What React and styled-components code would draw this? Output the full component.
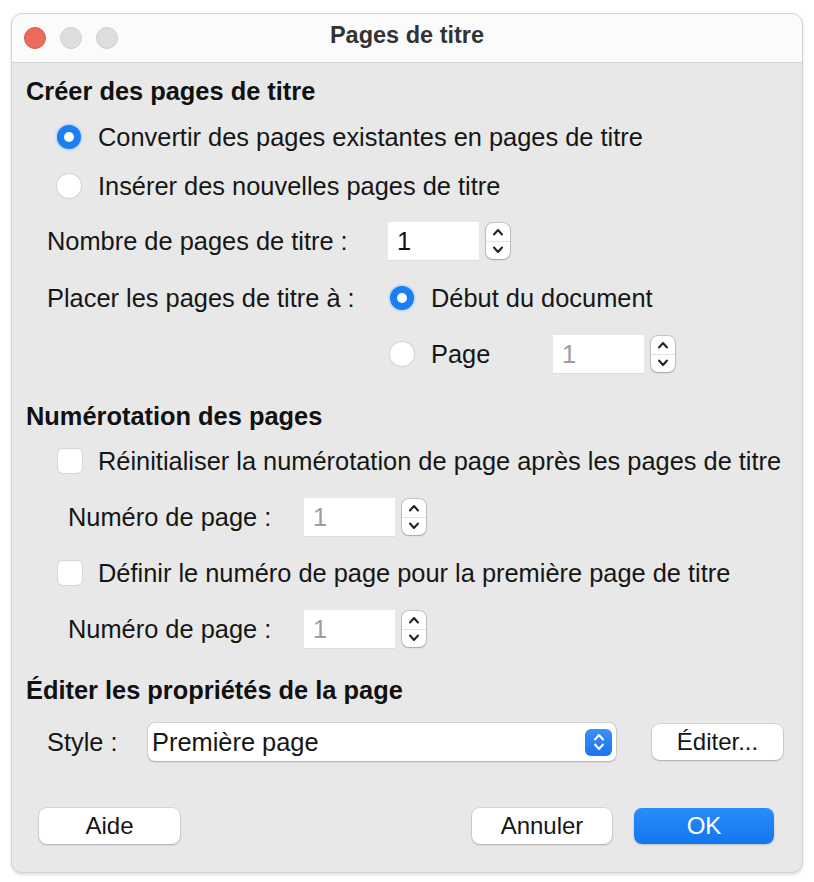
import React from "react";
import styled, { createGlobalStyle } from "styled-components";

const GlobalStyle = createGlobalStyle`
  * { box-sizing: border-box; }
  body {
    margin: 0;
    background: #ffffff;
    font-family: "Liberation Sans", Arial, sans-serif;
  }
`;

const Page = styled.div`
  width: 814px;
  height: 882px;
  padding: 13px 0 0 11px;
`;

const Window = styled.div`
  width: 792px;
  height: 860px;
  display: flex;
  flex-direction: column;
  background: #e8e8e8;
  border: 1px solid #d2d2d2;
  border-radius: 11px;
  overflow: hidden;
  box-shadow: 0 2px 3px rgba(0, 0, 0, 0.12);
`;

const TitleBar = styled.div`
  height: 49px;
  flex: none;
  display: grid;
  grid-template-columns: 1fr auto 1fr;
  align-items: center;
  padding: 0 12px;
  background: #fbfbfb;
  border-bottom: 1px solid #d4d4d4;
`;

const Lights = styled.div`
  display: flex;
  gap: 14px;
`;

const Light = styled.span`
  width: 22px;
  height: 22px;
  border-radius: 50%;
  background: ${(p) => (p.$red ? "#ec6a5e" : "#dedede")};
  border: 1px solid ${(p) => (p.$red ? "#d8574b" : "#d0d0d0")};
`;

const Title = styled.div`
  font-weight: 700;
  font-size: 23.5px;
  color: #333;
  padding-bottom: 5px;
`;

const Body = styled.div`
  flex: 1;
  display: flex;
  flex-direction: column;
  padding: 8px 0 0 14px;
  color: #161616;
  font-size: 25.4px;
`;

const Row = styled.div`
  display: flex;
  align-items: center;
  height: 40px;
  flex: none;
  margin-top: ${(p) => p.$mt || 0}px;
  padding-left: ${(p) => p.$indent || 0}px;
`;

const Heading = styled(Row)`
  font-weight: 700;
  font-size: 25.4px;
  color: #111;
`;

const Label = styled.span`
  width: ${(p) => (p.$w ? `${p.$w}px` : "auto")};
  flex: none;
  white-space: nowrap;
`;

const Radio = styled.span`
  width: 24px;
  height: 24px;
  flex: none;
  border-radius: 50%;
  display: flex;
  align-items: center;
  justify-content: center;
  margin-right: 17px;
  background: ${(p) => (p.$on ? "#1a7ff5" : "#ffffff")};
  box-shadow: ${(p) =>
    p.$on
      ? "0 0 3px rgba(26,127,245,0.55)"
      : "0 0 0 1px #d3d3d3, 0 1px 1px rgba(0,0,0,0.08)"};
  &::after {
    content: "";
    width: 10px;
    height: 10px;
    border-radius: 50%;
    background: #fff;
    display: ${(p) => (p.$on ? "block" : "none")};
  }
`;

const Check = styled.span`
  width: 24px;
  height: 24px;
  flex: none;
  border-radius: 5px;
  background: #fff;
  margin-right: 16px;
  box-shadow: 0 0 0 1px #d6d6d6, 0 1px 1px rgba(0, 0, 0, 0.06);
`;

const Field = styled.div`
  width: 91px;
  height: 38px;
  flex: none;
  display: flex;
  align-items: center;
  padding-left: 9px;
  background: #fff;
  color: ${(p) => (p.$off ? "#9c9c9c" : "#111")};
  box-shadow: 0 1px 0 #dcdcdc;
`;

const StepBox = styled.div`
  width: 24px;
  height: 36px;
  flex: none;
  margin-left: 7px;
  display: flex;
  flex-direction: column;
  background: #fff;
  border-radius: 7px;
  box-shadow: 0 0 0 1px rgba(0, 0, 0, 0.14), 0 1px 2px rgba(0, 0, 0, 0.18);
`;

const StepHalf = styled.div`
  flex: 1;
  display: flex;
  align-items: center;
  justify-content: center;
  border-top: ${(p) => (p.$low ? "1px solid #e2e2e2" : "none")};
`;

const Chevron = ({ up, color = "#222" }) => (
  <svg width="12" height="8" viewBox="0 0 12 8">
    <path
      d={up ? "M2 6.5 L6 2 L10 6.5" : "M2 1.5 L6 6 L10 1.5"}
      fill="none"
      stroke={color}
      strokeWidth="2"
      strokeLinecap="round"
      strokeLinejoin="round"
    />
  </svg>
);

const Spin = ({ value, off }) => (
  <>
    <Field $off={off}>{value}</Field>
    <StepBox>
      <StepHalf>
        <Chevron up />
      </StepHalf>
      <StepHalf $low>
        <Chevron />
      </StepHalf>
    </StepBox>
  </>
);

const Select = styled.div`
  width: 468px;
  height: 38px;
  flex: none;
  display: flex;
  align-items: center;
  justify-content: space-between;
  padding: 0 4px 0 4px;
  background: #fff;
  border-radius: 7px;
  box-shadow: 0 0 0 1px rgba(0, 0, 0, 0.08), 0 1px 2px rgba(0, 0, 0, 0.2);
`;

const SelectKnob = styled.span`
  width: 27px;
  height: 27px;
  display: flex;
  flex-direction: column;
  align-items: center;
  justify-content: center;
  gap: 2px;
  border-radius: 6px;
  background: linear-gradient(#3b8ff7, #1a74ee);
`;

const Button = styled.button`
  width: ${(p) => p.$w || 140}px;
  height: 36px;
  flex: none;
  border: none;
  border-radius: 8px;
  font-family: inherit;
  font-size: 24px;
  color: ${(p) => (p.$primary ? "#fff" : "#161616")};
  background: ${(p) =>
    p.$primary ? "linear-gradient(#2a8cf8, #1376f1)" : "#ffffff"};
  box-shadow: ${(p) =>
    p.$primary
      ? "0 1px 2px rgba(0,0,0,0.2)"
      : "0 0 0 1px rgba(0,0,0,0.08), 0 1px 2px rgba(0,0,0,0.2)"};
  margin-left: ${(p) => p.$ml || 0}px;
  padding: 0;
`;

const Footer = styled.div`
  margin-top: auto;
  display: flex;
  align-items: center;
  padding: 0 28px 28px 13px;
`;

const Spacer = styled.div`
  flex: 1;
`;

export default function App() {
  return (
    <>
      <GlobalStyle />
      <Page>
        <Window>
          <TitleBar>
            <Lights>
              <Light $red />
              <Light />
              <Light />
            </Lights>
            <Title>Pages de titre</Title>
            <span />
          </TitleBar>
          <Body>
            <Heading>Créer des pages de titre</Heading>
            <Row $mt={6} $indent={31}>
              <Radio $on />
              <Label>Convertir des pages existantes en pages de titre</Label>
            </Row>
            <Row $mt={9} $indent={31}>
              <Radio />
              <Label>Insérer des nouvelles pages de titre</Label>
            </Row>
            <Row $mt={15} $indent={21}>
              <Label $w={341}>Nombre de pages de titre :</Label>
              <Spin value="1" />
            </Row>
            <Row $mt={17} $indent={21}>
              <Label $w={343}>Placer les pages de titre à :</Label>
              <Radio $on />
              <Label>Début du document</Label>
            </Row>
            <Row $mt={16} $indent={364}>
              <Radio />
              <Label $w={122}>Page</Label>
              <Spin value="1" off />
            </Row>

            <Heading $mt={22}>Numérotation des pages</Heading>
            <Row $mt={5} $indent={32}>
              <Check />
              <Label>
                Réinitialiser la numérotation de page après les pages de titre
              </Label>
            </Row>
            <Row $mt={16} $indent={42}>
              <Label $w={236}>Numéro de page :</Label>
              <Spin value="1" off />
            </Row>
            <Row $mt={16} $indent={32}>
              <Check />
              <Label>
                Définir le numéro de page pour la première page de titre
              </Label>
            </Row>
            <Row $mt={16} $indent={42}>
              <Label $w={236}>Numéro de page :</Label>
              <Spin value="1" off />
            </Row>

            <Heading $mt={21}>Éditer les propriétés de la page</Heading>
            <Row $mt={12} $indent={21}>
              <Label $w={101}>Style :</Label>
              <Select>
                <span>Première page</span>
                <SelectKnob>
                  <Chevron up color="#fff" />
                  <Chevron color="#fff" />
                </SelectKnob>
              </Select>
              <Button $w={131} $ml={36}>
                Éditer...
              </Button>
            </Row>

            <Footer>
              <Button $w={141}>Aide</Button>
              <Spacer />
              <Button>Annuler</Button>
              <Button $primary $ml={22}>
                OK
              </Button>
            </Footer>
          </Body>
        </Window>
      </Page>
    </>
  );
}
